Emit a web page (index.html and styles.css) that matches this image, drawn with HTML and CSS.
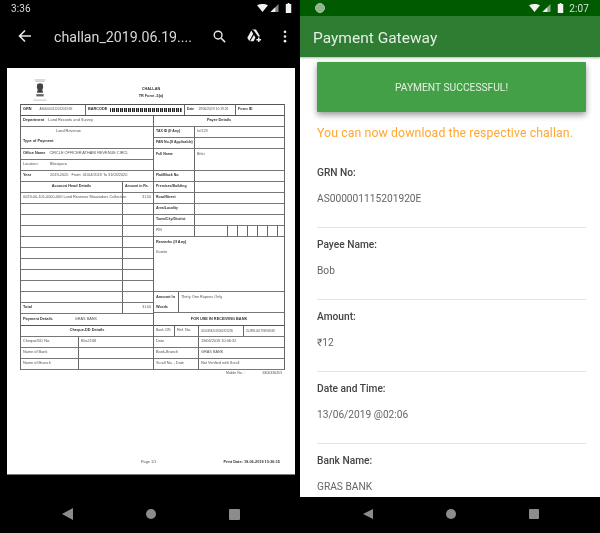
FILE: index.html
```html
<!DOCTYPE html>
<html lang="en">
<head>
<meta charset="utf-8">
<title>Challan and payment gateway</title>
<link rel="stylesheet" href="styles.css">
</head>
<body>
<div class="shots">
  <section class="phone viewer">
    <div class="status">
      <span class="clock">3:36</span>
      <span class="status-icons">
        <svg class="ic-wifi" viewBox="0 0 14 10"><path d="M0 1.5C4 -.5 10 -.5 14 1.5L7 10Z"/></svg>
        <svg class="ic-signal" viewBox="0 0 10 10"><path d="M10 0V10H0Z" opacity=".55"/><path d="M6 4V10H0Z"/></svg>
        <svg class="ic-batt" viewBox="0 0 6 11"><path d="M2 0H4V1H6V11H0V1H2Z"/></svg>
      </span>
    </div>
    <div class="toolbar">
      <svg class="ic-back" viewBox="0 0 14 14"><path d="M13 7H2M7 1.5 1.5 7 7 12.5" fill="none" stroke="#e8e8e8" stroke-width="1.6"/></svg>
      <span class="file">challan_2019.06.19....</span>
      <svg class="ic-search" viewBox="0 0 14 14"><circle cx="5.5" cy="5.5" r="4.2" fill="none" stroke="#e8e8e8" stroke-width="1.5"/><path d="M8.6 8.6 13 13" stroke="#e8e8e8" stroke-width="1.7"/></svg>
      <svg class="ic-drive" viewBox="0 0 16 14"><path d="M5.4 0H9.6L14 7.6H11.8L7.5 1.4ZM4.6 1.2 6.6 4.6 2.4 12.4.3 8.8ZM7.4 6 9 8.6 7 12.6H3.4Z" fill="#eee"/><path d="M12.5 8.6V13.4M10 11H15" stroke="#eee" stroke-width="1.6"/></svg>
      <svg class="ic-more" viewBox="0 0 4 14"><circle cx="2" cy="2" r="1.4"/><circle cx="2" cy="7" r="1.4"/><circle cx="2" cy="12" r="1.4"/></svg>
    </div>
    <div class="doc-area">
      <article class="page">
        <header class="page-head">
          <svg class="emblem" viewBox="0 0 16 24"><path d="M2 1H14M3 2.5H13" stroke="#aaa" stroke-width=".8"/><path d="M5 5.5 8 4.5 11 5.5 11.5 9 10.5 12 11.5 15H4.500L5.500 12 4.500 9Z" fill="#444"/><path d="M4 16.500H12V19H4Z" fill="#666"/><path d="M1 23H15" stroke="#aaa" stroke-width=".8"/></svg>
          <div class="doc-title"><b>CHALLAN</b><b>TR Form -5(a)</b></div>
        </header>
        <div class="form">
          <div class="r top">
            <div class="c w-grn"><b>GRN</b><span class="gap-g">AS000001120120192E</span></div>
            <div class="c w-bar"><b>BARCODE</b><i class="barcode"></i></div>
            <div class="c w-date"><b>Date</b><span class="gap">19/06/2019 10:19:26</span></div>
            <div class="c w-form"><b>Form ID</b></div>
          </div>
          <div class="cols">
            <div class="col">
              <div class="r"><div class="c fill"><b>Department</b><span class="gap">Land Records and Survey</span></div></div>
              <div class="r h22"><div class="c fill stack"><span class="ind">Land Revenue</span><b>Type of Payment</b></div></div>
              <div class="r"><div class="c fill"><b>Office Name</b><span class="gap">CIRCLE OFFICER ATHANI REVENUE CIRCL</span></div></div>
              <div class="r"><div class="c fill"><span class="lab">Location</span><span class="gap">Bilasipara</span></div></div>
              <div class="r"><div class="c fill"><b class="lab">Year</b><span class="gap">2019-2020 &nbsp; From: 01/04/2019 To 31/03/2020</span></div></div>
              <div class="r"><div class="c w-head center"><b>Account Head Details</b></div><div class="c w-amt"><b>Amount in Rs.</b></div></div>
              <div class="r"><div class="c w-head spill"><span>0029-00-101-0000-000 Land Revenue Mouzadars Collection</span></div><div class="c w-amt end"><span>31.00</span></div></div>
              <div class="r"><div class="c w-head"></div><div class="c w-amt"></div></div>
              <div class="r"><div class="c w-head"></div><div class="c w-amt"></div></div>
              <div class="r"><div class="c w-head"></div><div class="c w-amt"></div></div>
              <div class="r"><div class="c w-head"></div><div class="c w-amt"></div></div>
              <div class="r"><div class="c w-head"></div><div class="c w-amt"></div></div>
              <div class="r"><div class="c w-head"></div><div class="c w-amt"></div></div>
              <div class="r"><div class="c w-head"></div><div class="c w-amt"></div></div>
              <div class="r"><div class="c w-head"></div><div class="c w-amt"></div></div>
              <div class="r"><div class="c w-head"></div><div class="c w-amt"></div></div>
              <div class="r"><div class="c w-head"><b>Total</b></div><div class="c w-amt end"><span>31.00</span></div></div>
            </div>
            <div class="col">
              <div class="r"><div class="c fill center"><b>Payer Details</b></div></div>
              <div class="r"><div class="c w-key"><b>TAX ID (If Any)</b></div><div class="c fill"><span>kr/123</span></div></div>
              <div class="r"><div class="c w-key"><b>PAN No.(If Applicable)</b></div><div class="c fill"></div></div>
              <div class="r h22"><div class="c w-key top-a"><b>Full Name</b></div><div class="c fill top-a"><span>Bittu</span></div></div>
              <div class="r"><div class="c w-key"><b>Flat/Block No.</b></div><div class="c fill"></div></div>
              <div class="r"><div class="c w-key"><b>Premises/Building</b></div><div class="c fill"></div></div>
              <div class="r"><div class="c w-key"><b>Road/Street</b></div><div class="c fill"></div></div>
              <div class="r"><div class="c w-key"><b>Area/Locality</b></div><div class="c fill"></div></div>
              <div class="r"><div class="c w-key"><b>Town/City/District</b></div><div class="c fill"></div></div>
              <div class="r"><div class="c w-key"><span>PIN</span></div><div class="c w-pin0"></div><div class="c w-pin"></div><div class="c w-pin"></div><div class="c w-pin"></div><div class="c w-pin"></div><div class="c w-pin"></div><div class="c fill"></div></div>
              <div class="r h55"><div class="c fill stack remarks"><b>Remarks (If Any)</b><span>Kamto</span></div></div>
              <div class="r h21"><div class="c w-words stack words"><b>Amount In</b><b>Words</b></div><div class="c fill top-a"><span>Thirty One Rupees Only</span></div></div>
            </div>
          </div>
          <div class="cols">
            <div class="col">
              <div class="r thick"><div class="c fill"><b>Payment Details</b><span class="gap-l">GRAS BANK</span></div></div>
              <div class="r"><div class="c fill center"><b>Cheque-DD Details</b></div></div>
              <div class="r"><div class="c w-chq"><span>Cheque/DD No.</span></div><div class="c fill"><span>Ebs2168</span></div></div>
              <div class="r"><div class="c w-chq"><span>Name of Bank</span></div><div class="c fill"></div></div>
              <div class="r"><div class="c w-chq"><span>Name of Branch</span></div><div class="c fill"></div></div>
            </div>
            <div class="col">
              <div class="r thick"><div class="c fill center"><b>FOR USE IN RECEIVING BANK</b></div></div>
              <div class="r"><div class="c w-cin"><span>Bank CIN</span></div><div class="c w-ref"><span>Ref. No.</span></div><div class="c w-n1"><span>02003942019061925290</span></div><div class="c fill"><span>252881061796909069</span></div></div>
              <div class="r"><div class="c w-dl"><span>Date</span></div><div class="c fill"><span>19/06/2019 10:06:32</span></div></div>
              <div class="r"><div class="c w-dl"><span>Bank-Branch</span></div><div class="c fill"><span>GRAS BANK</span></div></div>
              <div class="r"><div class="c w-dl"><span>Scroll No. , Date</span></div><div class="c fill"><span>Not Verified with Scroll</span></div></div>
            </div>
          </div>
        </div>
        <div class="mobile"><span>Mobile No. :</span><span>6800336453</span></div>
        <footer class="print"><span>Page 1/1</span><b>Print Date: 19-06-2019 10:26:15</b></footer>
      </article>
    </div>
    <div class="nav nav-dark">
      <i class="n-back"></i><i class="n-home"></i><i class="n-stop"></i>
    </div>
  </section>

  <section class="phone gateway">
    <div class="status green">
      <i class="dot"></i>
      <span class="status-icons">
        <svg class="ic-wifi" viewBox="0 0 14 10"><path d="M0 1.500C4 -.5 10 -.5 14 1.500L7 10Z"/></svg>
        <svg class="ic-signal" viewBox="0 0 10 10"><path d="M10 0V10H0Z" opacity=".55"/><path d="M6 4V10H0Z"/></svg>
        <svg class="ic-batt" viewBox="0 0 6 11"><path d="M2 0H4V1H6V11H0V1H2Z"/></svg>
        <span class="clock">2:07</span>
      </span>
    </div>
    <div class="appbar"><span class="appbar-title">Payment Gateway</span></div>
    <main class="content">
      <div class="banner">PAYMENT SUCCESSFUL!</div>
      <p class="notice">You can now download the respective challan.</p>
      <div class="field"><h2>GRN No:</h2><p>AS000001115201920E</p></div>
      <div class="field"><h2>Payee Name:</h2><p>Bob</p></div>
      <div class="field"><h2>Amount:</h2><p>₹12</p></div>
      <div class="field"><h2>Date and Time:</h2><p>13/06/2019 @02:06</p></div>
      <div class="field"><h2>Bank Name:</h2><p>GRAS BANK</p></div>
    </main>
    <div class="nav nav-small">
      <i class="n-back"></i><i class="n-home"></i><i class="n-stop"></i>
    </div>
  </section>
</div>
</body>
</html>
```

FILE: styles.css
```css
* { box-sizing: border-box; }
html, body { margin: 0; padding: 0; background: #fff; }
body { width: 600px; height: 533px; overflow: hidden; font-family: Roboto, "Liberation Sans", sans-serif; }
.shots { display: flex; width: 600px; height: 533px; filter: blur(.35px); }
.phone { width: 300px; height: 533px; display: flex; flex-direction: column; overflow: hidden; }
.viewer { background: #000; }
.gateway { background: #fff; }

.status { height: 16px; flex: none; display: flex; align-items: center; justify-content: space-between; color: #ddd; padding: 0 8px 0 11px; }
.status.green { background: #005a00; padding: 0 11px 0 15px; }
.clock { font-size: 10px; letter-spacing: .1px; color: #ddd; }
.status-icons { display: flex; align-items: center; gap: 2px; }
.status-icons svg { fill: #f2f2f2; display: block; }
.ic-wifi { width: 11px; height: 8px; }
.ic-signal { width: 9px; height: 8px; }
.ic-batt { width: 7px; height: 10px; margin-left: 4px; }
.green .ic-batt { margin-left: 4px; margin-right: 3px; }
.dot { width: 10px; height: 10px; border-radius: 50%; background: #8fb58f; border: 1px solid #a5c4a5; }

.toolbar { height: 40px; flex: none; display: flex; align-items: center; padding: 0 12px 0 18px; }
.ic-back { width: 14px; height: 14px; flex: none; }
.file { margin-left: 22px; padding-top: 2px; width: 142px; flex: none; font-size: 14.2px; color: #d8d8d8; white-space: nowrap; }
.ic-search { width: 13px; height: 13px; margin-left: 17px; flex: none; }
.ic-drive { width: 15px; height: 14px; margin-left: 21px; flex: none; }
.ic-more { width: 4px; height: 13px; margin-left: 21px; fill: #eee; flex: none; }

.doc-area { flex: 1; padding: 12px 5px 0 7px; }
.page { height: 407px; background: #fff; border-bottom: 1px solid #777; position: relative; padding: 9px 0 0 13px; color: #333; font-family: "Liberation Sans", sans-serif; font-size: 3.85px; line-height: 1; filter: blur(.3px); }
.page b { font-weight: 700; }
.page-head { height: 27px; display: flex; }
.emblem { width: 16px; height: 22px; margin: 2px 0 0 12px; flex: none; }
.doc-title { margin-left: 78px; padding-top: 11px; display: flex; flex-direction: column; align-items: center; gap: 3px; width: 50px; font-size: 3.8px; }

.form { width: 265px; border-left: 1px solid #666; border-right: 1px solid #666; border-top: 1px solid #555; }
.cols { display: flex; }
.col { width: 132px; flex: none; }
.col + .col { width: 131px; border-left: 1px solid #666; }
.r { height: 11px; display: flex; border-bottom: 1px solid #777; }
.r.top { height: 11px; border-bottom: 1px solid #555; }
.r.thick { height: 12px; border-bottom: 1px solid #555; }
.h22 { height: 22px; }
.h55 { height: 55px; }
.h21 { height: 21px; }
.c { display: flex; align-items: center; padding: 0 2px; white-space: nowrap; overflow: hidden; min-width: 0; border-right: 1px solid #666; flex: none; }
.c:last-child { border-right: 0; }
.c span { color: #555; }
.c.spill { overflow: visible; }
.fill { flex: 1; }
.center { justify-content: center; }
.end { justify-content: flex-end; }
.stack { flex-direction: column; align-items: flex-start; justify-content: flex-start; }
.top-a { align-items: flex-start; padding-top: 3.5px; }
.gap { margin-left: 4px; }
.gap-g { margin-left: 8px; font-size: 3.2px; }
.gap-l { margin-left: 22px; }
.lab { width: 25px; }
.lab + .gap { margin-left: 2px; }
.ind { margin: 3px 0 6px 33px; }
.remarks { padding-top: 3.5px; gap: 7px; }
.words { padding-top: 3.5px; gap: 7px; }
.w-grn { width: 65px; }
.w-bar { width: 99px; gap: 3px; }
.w-date { width: 51px; font-size: 3.3px; }
.w-form { flex: 1; }
.barcode { display: block; flex: 1; height: 3.500px; background: repeating-linear-gradient(90deg, #222 0 1.500px, #fff 1.500px 2px, #222 2px 3px, #888 3px 4px); }
.w-head { width: 102px; }
.w-amt { flex: 1; font-size: 3.5px; }
.w-key { width: 41px; font-size: 3.5px; }
.w-pin0 { width: 33px; }
.w-pin { width: 10px; }
.w-words { width: 25px; }
.w-chq { width: 58px; }
.w-cin { width: 21px; font-size: 3.4px; }
.w-ref { width: 24px; }
.w-n1 { width: 45px; font-size: 2.9px; }
.w-n1 + .fill { font-size: 2.9px; }
.w-dl { width: 45px; }
.mobile { display: flex; width: 265px; padding: 1.500px 3px 0 206px; justify-content: space-between; font-size: 3.5px; }
.print { margin-top: 86px; display: flex; width: 260px; padding-left: 121px; justify-content: space-between; }
.print span { color: #555; }
.mobile span { color: #555; }

.appbar { height: 41px; flex: none; display: flex; align-items: center; padding: 2px 0 0 13px; background: #2e7d32; color: #e6efe6; font-size: 15.5px; box-shadow: 0 1px 2px rgba(0,0,0,.3); position: relative; }
.content { flex: 1; overflow: hidden; padding: 5px 14px 0 17px; }
.banner { height: 50px; display: flex; align-items: center; justify-content: center; background: #43a047; color: #e4f0e4; font-size: 10.25px; border-radius: 1px; box-shadow: 0 3px 6px rgba(0,0,0,.4); }
.notice { margin: 14px 0 0; height: 30px; line-height: 14px; color: #ffa733; font-size: 12.25px; letter-spacing: .12px; white-space: nowrap; }
.field { height: 72px; padding-top: 10px; border-bottom: 1px solid #e4e4e4; }
.field h2 { margin: 0; font-size: 10.2px; line-height: 14px; font-weight: 500; color: #444; }
.field p { margin: 12px 0 0; font-size: 10.2px; line-height: 14px; color: #666; }

.nav { flex: none; background: #000; display: flex; align-items: center; justify-content: center; }
.nav-dark { height: 38px; gap: 73px; padding: 0 0 0 1px; }
.nav-small { height: 36px; gap: 73px; padding: 0 0 2px 2px; }
.n-back { display: block; width: 0; height: 0; border-style: solid; border-color: transparent #8c8c8c transparent transparent; }
.n-home { display: block; border-radius: 50%; background: #8c8c8c; }
.n-stop { display: block; background: #8c8c8c; border-radius: 1px; }
.nav-dark .n-back { border-width: 6px 11px 6px 0; }
.nav-dark .n-home { width: 10px; height: 10px; }
.nav-dark .n-stop { width: 11px; height: 11px; }
.nav-small .n-back { border-width: 5px 10px 5px 0; }
.nav-small .n-home { width: 10px; height: 10px; }
.nav-small .n-stop { width: 10px; height: 10px; }
```
